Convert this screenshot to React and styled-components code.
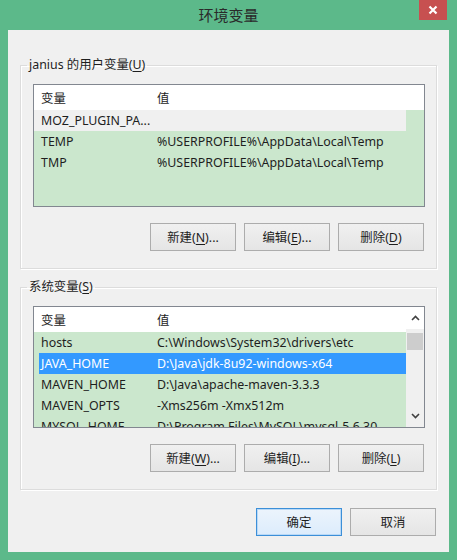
import React from 'react'
import styled, { createGlobalStyle } from 'styled-components'

const GlobalStyle = createGlobalStyle`
	html, body {
		margin: 0;
		padding: 0;
		background: #5cb98a;
	}
	body {
		font-family: 'Noto Sans', 'Noto Sans CJK SC', sans-serif;
		font-size: 12.4px;
		color: #1e1e1e;
	}
`

const userVars = [
	{ name: 'MOZ_PLUGIN_PA...', value: '', focus: true },
	{ name: 'TEMP', value: '%USERPROFILE%\\AppData\\Local\\Temp' },
	{ name: 'TMP', value: '%USERPROFILE%\\AppData\\Local\\Temp' },
]

const sysVars = [
	{ name: 'hosts', value: 'C:\\Windows\\System32\\drivers\\etc' },
	{ name: 'JAVA_HOME', value: 'D:\\Java\\jdk-8u92-windows-x64', selected: true },
	{ name: 'MAVEN_HOME', value: 'D:\\Java\\apache-maven-3.3.3' },
	{ name: 'MAVEN_OPTS', value: '-Xms256m -Xmx512m' },
	{ name: 'MYSQL_HOME', value: 'D:\\Program Files\\MySQL\\mysql-5.6.30' },
]

function Label({ text, hot, after = ')' }) {
	return (
		<>
			{text}(<U>{hot}</U>{after}
		</>
	)
}

function VarList({ rows, scroll, height }) {
	return (
		<ListBox $height={height}>
			<ListMain>
				<Header>
					<Col1>变量</Col1>
					<Col2>值</Col2>
				</Header>
				{rows.map((row, i) => (
					<Row key={`row--${i}`} $selected={row.selected} $focus={row.focus}>
						<Col1>{row.name}</Col1>
						<Col2>{row.value}</Col2>
					</Row>
				))}
			</ListMain>
			{scroll && (
				<ScrollBar>
					<Arrow>
						<svg width="9" height="6" viewBox="0 0 9 6">
							<path d="M1 5 L4.5 1.5 L8 5" fill="none" stroke="#404040" strokeWidth="1.6" />
						</svg>
					</Arrow>
					<Track>
						<Thumb />
					</Track>
					<Arrow>
						<svg width="9" height="6" viewBox="0 0 9 6">
							<path d="M1 1 L4.5 4.5 L8 1" fill="none" stroke="#404040" strokeWidth="1.6" />
						</svg>
					</Arrow>
				</ScrollBar>
			)}
		</ListBox>
	)
}

export default function App() {
	return (
		<>
			<GlobalStyle />
			<Window>
				<TitleBar>
					<span />
					<Title>环境变量</Title>
					<CloseButton>
						<svg width="10" height="10" viewBox="0 0 10 10">
							<path d="M1.5 1.5 L8.5 8.5 M8.5 1.5 L1.5 8.5" stroke="#fff" strokeWidth="2.2" />
						</svg>
					</CloseButton>
				</TitleBar>
				<Client>
					<Group>
						<Legend>
							janius 的用户变量(<U>U</U>)
						</Legend>
						<VarList rows={userVars} height={123} />
						<ButtonRow>
							<Button><Label text="新建" hot="N" after=")..." /></Button>
							<Button><Label text="编辑" hot="E" after=")..." /></Button>
							<Button><Label text="删除" hot="D" /></Button>
						</ButtonRow>
					</Group>
					<Group $second>
						<Legend>
							系统变量(<U>S</U>)
						</Legend>
						<VarList rows={sysVars} scroll height={122} />
						<ButtonRow>
							<Button><Label text="新建" hot="W" after=")..." /></Button>
							<Button><Label text="编辑" hot="I" after=")..." /></Button>
							<Button><Label text="删除" hot="L" /></Button>
						</ButtonRow>
					</Group>
					<DialogButtons>
						<Button $default>确定</Button>
						<Button>取消</Button>
					</DialogButtons>
				</Client>
			</Window>
		</>
	)
}

const Window = styled.div`
	width: 457px;
	height: 560px;
	background: #5cb98a;
	display: flex;
	flex-direction: column;
	box-sizing: border-box;
`

const TitleBar = styled.div`
	height: 30px;
	display: grid;
	grid-template-columns: 1fr auto 1fr;
	align-items: start;
`

const Title = styled.div`
	font-family: 'Noto Sans CJK SC', sans-serif;
	font-size: 15px;
	line-height: 30px;
	color: #2a2a2a;
`

const CloseButton = styled.div`
	justify-self: end;
	margin-right: 10px;
	width: 28px;
	height: 20px;
	background: #c75050;
	display: flex;
	align-items: center;
	justify-content: center;
`

const Client = styled.div`
	flex: 1;
	margin: 0 8px 8px;
	background: #f0f0f0;
	padding: 28px 12px 0;
	display: flex;
	flex-direction: column;
`

const Group = styled.fieldset`
	margin: ${(p) => (p.$second ? '11px' : '0')} 0 0;
	padding: 12px 11px 17px 12px;
	border: 1px solid #dcdcdc;
	box-shadow: inset 1px 1px 0 #fff, 1px 1px 0 #fff;
	min-width: 0;
`

const Legend = styled.legend`
	padding: 0 2px;
	margin-left: -6px;
	font-size: 12.4px;
	line-height: 14px;
	color: #1e1e1e;
`

const U = styled.span`
	text-decoration: underline;
	text-underline-offset: 2px;
`

const ListBox = styled.div`
	height: ${(p) => p.$height}px;
	box-sizing: border-box;
	border: 1px solid #828790;
	background: #cbe7cd;
	display: flex;
	overflow: hidden;
`

const ListMain = styled.div`
	flex: 1;
	display: flex;
	flex-direction: column;
`

const Header = styled.div`
	height: 25px;
	flex: none;
	background: #fff;
	display: flex;
	align-items: center;
`

const Row = styled.div`
	height: 21px;
	flex: none;
	display: flex;
	align-items: center;
	margin-left: ${(p) => (p.$selected ? '5px' : '0')};
	margin-right: ${(p) => (p.$focus ? '18px' : '0')};
	background: ${(p) => (p.$selected ? '#3399ff' : p.$focus ? '#f0f0f0' : 'transparent')};
	color: ${(p) => (p.$selected ? '#fff' : '#1e1e1e')};

	& > div:first-child {
		margin-left: ${(p) => (p.$selected ? '-5px' : '0')};
	}
`

const Col1 = styled.div`
	width: 116px;
	padding-left: 7px;
	white-space: nowrap;
	flex: none;
`

const Col2 = styled.div`
	white-space: nowrap;
`

const ScrollBar = styled.div`
	width: 18px;
	flex: none;
	background: #f0f0f0;
	display: flex;
	flex-direction: column;
`

const Arrow = styled.div`
	height: 22px;
	display: flex;
	align-items: center;
	justify-content: center;
	background: #fff;
	flex: none;

	&:last-child {
		background: #f0f0f0;
	}
`

const Track = styled.div`
	flex: 1;
	padding: 4px 1px 0 1px;
`

const Thumb = styled.div`
	height: 17px;
	background: #cdcdcd;
`

const ButtonRow = styled.div`
	display: flex;
	justify-content: flex-end;
	gap: 8px;
	margin-top: 16px;
	padding-right: 1px;
`

const Button = styled.div`
	width: 86px;
	height: 28px;
	box-sizing: border-box;
	display: flex;
	align-items: center;
	justify-content: center;
	border: 1px solid ${(p) => (p.$default ? '#3c8fd8' : '#acacac')};
	background: ${(p) =>
		p.$default
			? 'linear-gradient(#ecf4fc, #dcecfc)'
			: 'linear-gradient(#f0f0f0, #e5e5e5)'};
	box-shadow: ${(p) => (p.$default ? 'inset 0 0 0 1px #b9d9f7' : 'none')};
	color: #1e1e1e;
	white-space: nowrap;
`

const DialogButtons = styled.div`
	display: flex;
	justify-content: flex-end;
	gap: 8px;
	margin-top: 18px;
	padding-right: 1px;
`
